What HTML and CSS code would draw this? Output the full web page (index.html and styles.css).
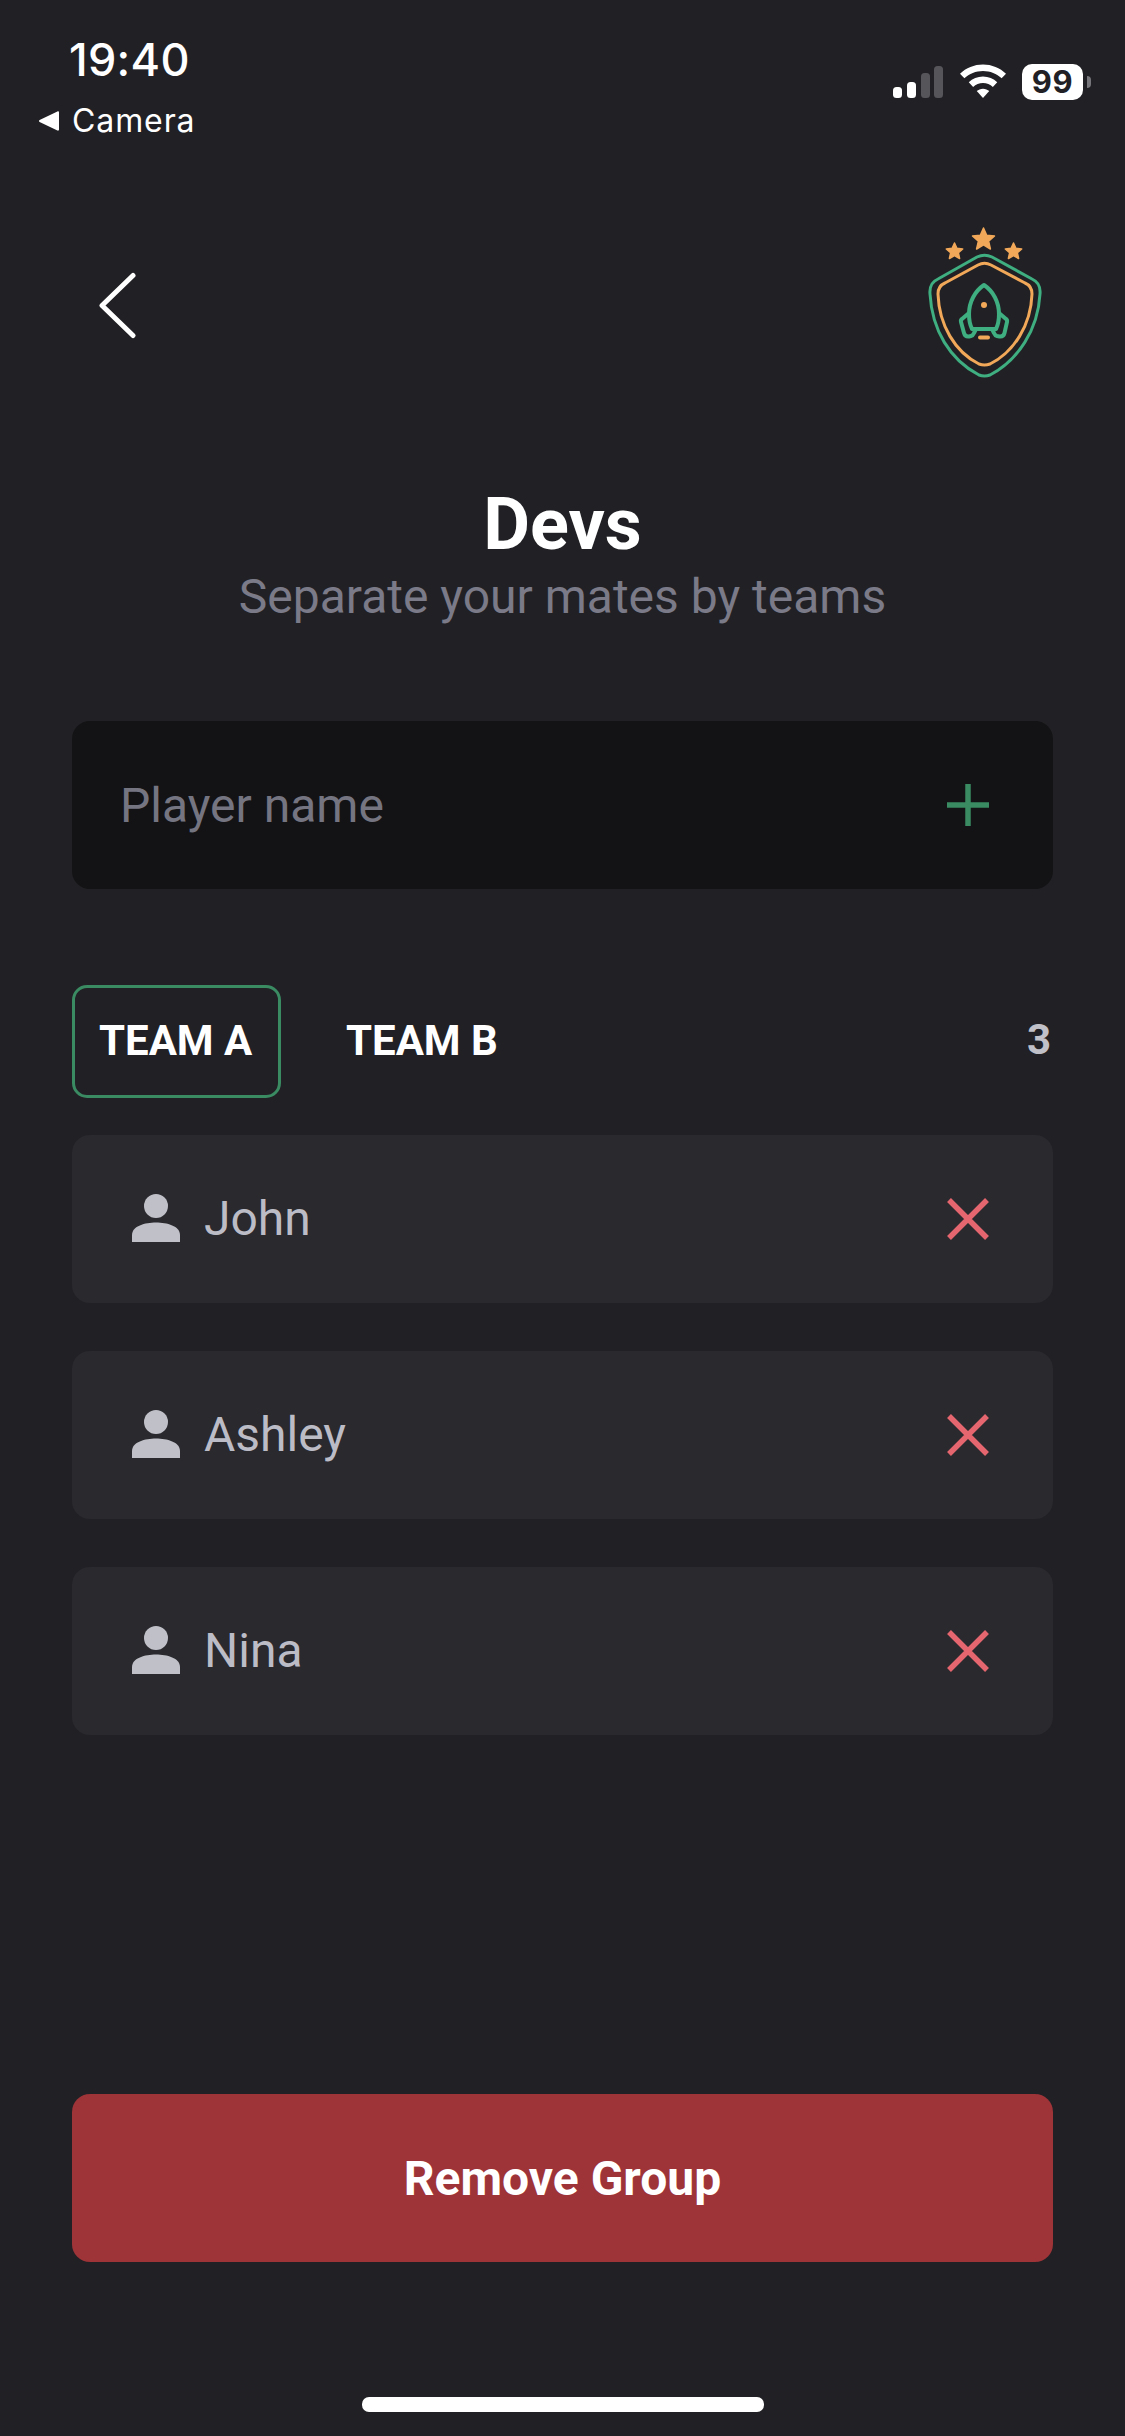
FILE: index.html
```html
<!DOCTYPE html>
<html lang="en">
<head>
<meta charset="utf-8">
<title>Devs</title>
<link rel="stylesheet" href="styles.css">
</head>
<body>
<div class="page">
  <div class="status">
    <div class="status-left">
      <div class="time">19:40</div>
      <div class="camera"><svg class="cam-tri" viewBox="0 0 22 22"><path d="M21 2.500v17c0 1-.8 1.400-1.600 1L1.600 12c-.8-.4-.8-1.600 0-2L19.400 1.500c.8-.4 1.600 0 1.600 1z" fill="#fff"/></svg><span>Camera</span></div>
    </div>
    <div class="status-right">
      <svg class="signal" viewBox="0 0 50 34">
        <rect x="0" y="23" width="9" height="11" rx="3.500" fill="#fff"/>
        <rect x="14" y="18" width="9" height="16" rx="3.500" fill="#fff"/>
        <rect x="28" y="9" width="9" height="25" rx="3.500" fill="#55555a"/>
        <rect x="41" y="2" width="9" height="32" rx="3.500" fill="#55555a"/>
      </svg>
      <svg class="wifi" viewBox="2 2 42 31">
        <path d="M23 2.500c8 0 15.500 3.100 21 8.400l-4 4.200C35.600 10.900 29.500 8.400 23 8.400S10.400 10.900 6 15.100l-4-4.200C7.500 5.600 15 2.500 23 2.500z" fill="#fff"/>
        <path d="M23 13.500c5 0 9.600 1.900 13 5.200l-4 4.200c-2.400-2.200-5.600-3.500-9-3.500s-6.600 1.300-9 3.500l-4-4.200c3.400-3.300 8-5.200 13-5.200z" fill="#fff"/>
        <path d="M23 24.500c2.200 0 4.200.8 5.700 2.200L23 33l-5.700-6.300c1.500-1.400 3.500-2.200 5.700-2.200z" fill="#fff"/>
      </svg>
      <div class="battery"><span class="batt-num">99</span></div>
      <div class="batt-nub"></div>
    </div>
  </div>

  <div class="header">
    <svg class="back" viewBox="0 0 38 68"><path d="M34 3.500 3 33.500l31 30" fill="none" stroke="#fff" stroke-width="5" stroke-linecap="round" stroke-linejoin="round"/></svg>
    <svg class="logo" viewBox="0 0 165 180">
      <g fill="#f2a859" stroke="#f2a859" stroke-width="1.500" stroke-linejoin="round">
        <path d="M83.500 18l3.200 7.200 7.800.7-5.900 5.300 1.800 7.800-6.900-4.100-6.900 4.100 1.800-7.800-5.900-5.300 7.800-.7z"/>
        <path d="M54.500 33l2.400 5.300 5.800.6-4.300 3.900 1.200 5.700-5.100-2.900-5.100 2.900 1.200-5.700-4.300-3.900 5.800-.6z"/>
        <path d="M113.500 33l2.400 5.300 5.800.6-4.300 3.900 1.200 5.700-5.100-2.900-5.100 2.900 1.200-5.700-4.300-3.900 5.800-.6z"/>
      </g>
      <path d="M77 47 38 69Q29 73 30 84C32 120 50 150 79 165Q84.500 167 90 165C118 150 138 120 140 84Q141 73 132 69L92 47Q84.500 43.500 77 47z" fill="none" stroke="#3fae80" stroke-width="3"/>
      <path d="M78 55 45 73Q38 76 38 84C39 115 55 142 79 154Q84.500 156 90 154C114 142 131 115 132 84Q132 76 125 73L91 55Q84.500 51.500 78 55z" fill="none" stroke="#f2a859" stroke-width="3"/>
      <g fill="none" stroke="#3fae80" stroke-width="4" stroke-linejoin="round" stroke-linecap="round">
        <path d="M84 75C75 81 69 92 69 104 69 110 70 115 72 119H96C98 115 99 110 99 104 99 92 93 81 84 75z"/>
        <path d="M69 103 62 109Q60.500 110 61 112L64 123Q65 127 69 126.500L71 126Q73 125.500 74 123L76 119"/>
        <path d="M99 103 106 109Q107.500 110 107 112L104.500 123Q103.500 127 99.500 126.500L97 126Q95 125.500 94 123L92 119"/>
      </g>
      <circle cx="84" cy="95" r="3" fill="#f2a859"/>
      <path d="M80 127.500h8" fill="none" stroke="#f2a859" stroke-width="4" stroke-linecap="round"/>
    </svg>
  </div>

  <div class="title-block">
    <h1 class="title">Devs</h1>
    <p class="subtitle">Separate your mates by teams</p>
  </div>

  <div class="input-box">
    <span class="placeholder">Player name</span>
    <svg class="act-icon" viewBox="0 0 42 42"><path d="M21 0v42M0 21h42" stroke="#3a8a62" stroke-width="5.500" fill="none"/></svg>
  </div>

  <div class="tabs">
    <div class="tab tab-active">TEAM A</div>
    <div class="tab">TEAM B</div>
    <div class="count">3</div>
  </div>

  <div class="list">
    <div class="row">
      <svg class="user" viewBox="0 0 48 48"><circle cx="24" cy="12" r="12" fill="#c0c0c9"/><path d="M0 48v-7c0-9 13-12.500 24-12.500S48 32 48 41v7z" fill="#c0c0c9"/></svg>
      <span class="name">John</span>
      <svg class="act-icon" viewBox="0 0 42 42"><path d="M2 2l38 38M40 2 2 40" stroke="#e5666f" stroke-width="5.500" fill="none"/></svg>
    </div>
    <div class="row">
      <svg class="user" viewBox="0 0 48 48"><circle cx="24" cy="12" r="12" fill="#c0c0c9"/><path d="M0 48v-7c0-9 13-12.500 24-12.500S48 32 48 41v7z" fill="#c0c0c9"/></svg>
      <span class="name">Ashley</span>
      <svg class="act-icon" viewBox="0 0 42 42"><path d="M2 2l38 38M40 2 2 40" stroke="#e5666f" stroke-width="5.500" fill="none"/></svg>
    </div>
    <div class="row">
      <svg class="user" viewBox="0 0 48 48"><circle cx="24" cy="12" r="12" fill="#c0c0c9"/><path d="M0 48v-7c0-9 13-12.500 24-12.500S48 32 48 41v7z" fill="#c0c0c9"/></svg>
      <span class="name">Nina</span>
      <svg class="act-icon" viewBox="0 0 42 42"><path d="M2 2l38 38M40 2 2 40" stroke="#e5666f" stroke-width="5.500" fill="none"/></svg>
    </div>
  </div>

  <button class="remove" type="button">Remove Group</button>
  <div class="home-wrap"><div class="home"></div></div>
</div>
</body>
</html>
```
FILE: styles.css
```css
* { box-sizing: border-box; }
html, body { margin: 0; padding: 0; background: #212125; }
.page {
  width: 1125px;
  height: 2436px;
  display: flex;
  flex-direction: column;
  padding: 0 72px;
  font-family: Roboto, sans-serif;
  color: #fff;
  overflow: hidden;
}
.status {
  height: 150px;
  margin: 0 -72px;
  padding: 0 34px 0 38px;
  display: flex;
  justify-content: space-between;
}
.status-left { padding-top: 33px; font-family: Inter, sans-serif; }
.time { font-size: 45px; line-height: 54px; font-weight: 500; margin-left: 31px; letter-spacing: .3px; }
.camera { display: flex; align-items: center; gap: 12px; margin-top: 15px; font-size: 32px; line-height: 38px; letter-spacing: .9px; }
.cam-tri { width: 22px; height: 22px; }
.status-right { display: flex; align-items: flex-start; padding-top: 64px; }
.signal { width: 50px; height: 34px; margin-right: 17px; }
.wifi { width: 46px; height: 34px; margin-right: 16px; }
.battery {
  width: 61px; height: 36px; background: #fff; border-radius: 10px;
  display: flex; align-items: center; justify-content: center;
}
.batt-num { font-family: Inter, sans-serif; font-size: 31px; font-weight: 700; color: #212125; line-height: 36px; letter-spacing: .5px; }
.batt-nub { width: 4px; height: 12px; margin: 12px 0 0 4px; background: #77777b; border-radius: 0 4px 4px 0; }
.header { display: flex; justify-content: space-between; align-items: flex-start; margin: 0 -12px 0 27px; height: 333px; padding-top: 60px; flex: none; }
.back { width: 38px; height: 68px; margin-top: 62px; }
.logo { width: 165px; height: 180px; }
.title-block { text-align: center; }
.title { margin: 0; font-size: 72px; line-height: 84px; font-weight: 700; }
.subtitle { margin: 0; font-size: 48px; line-height: 60px; color: #7a7a88; }
.input-box {
  margin-top: 94px;
  height: 168px;
  flex: none;
  border-radius: 18px;
  background: #131315;
  display: flex;
  align-items: center;
  justify-content: space-between;
  padding: 0 64px 0 48px;
}
.placeholder { font-size: 48px; color: #757582; }
.act-icon { width: 42px; height: 42px; flex: none; }
.tabs { margin-top: 96px; height: 113px; flex: none; display: flex; align-items: flex-start; }
.tab {
  height: 113px; padding: 28px 24px 0; font-size: 42px; font-weight: 700; line-height: 50px;
  border: 3px solid transparent; border-radius: 15px;
}
.tab-active { border-color: #3a8a62; width: 209px; white-space: nowrap; margin-right: 38px; }
.count { margin-left: auto; padding-top: 30px; font-size: 42px; line-height: 50px; font-weight: 700; color: #c0c0c9; padding-right: 2px; }
.list { margin-top: 37px; display: flex; flex-direction: column; gap: 48px; }
.row {
  height: 168px; border-radius: 18px; background: #29292e;
  display: flex; align-items: center; padding: 0 64px 0 60px;
}
.user { width: 48px; height: 48px; flex: none; margin-bottom: 2px; }
.name { margin-left: 24px; font-size: 48px; color: #bcbcc6; flex: 1; padding-bottom: 2px; }
.remove {
  margin-top: auto; height: 168px; border: 0; border-radius: 18px; background: #9e3338;
  color: #fff; font-family: Roboto, sans-serif; font-size: 48px; font-weight: 700; flex: none; width: 100%;
}
.home-wrap { height: 174px; padding-top: 135px; display: flex; justify-content: center; flex: none; }
.home { width: 402px; height: 15px; border-radius: 7px; background: #fff; }
```
